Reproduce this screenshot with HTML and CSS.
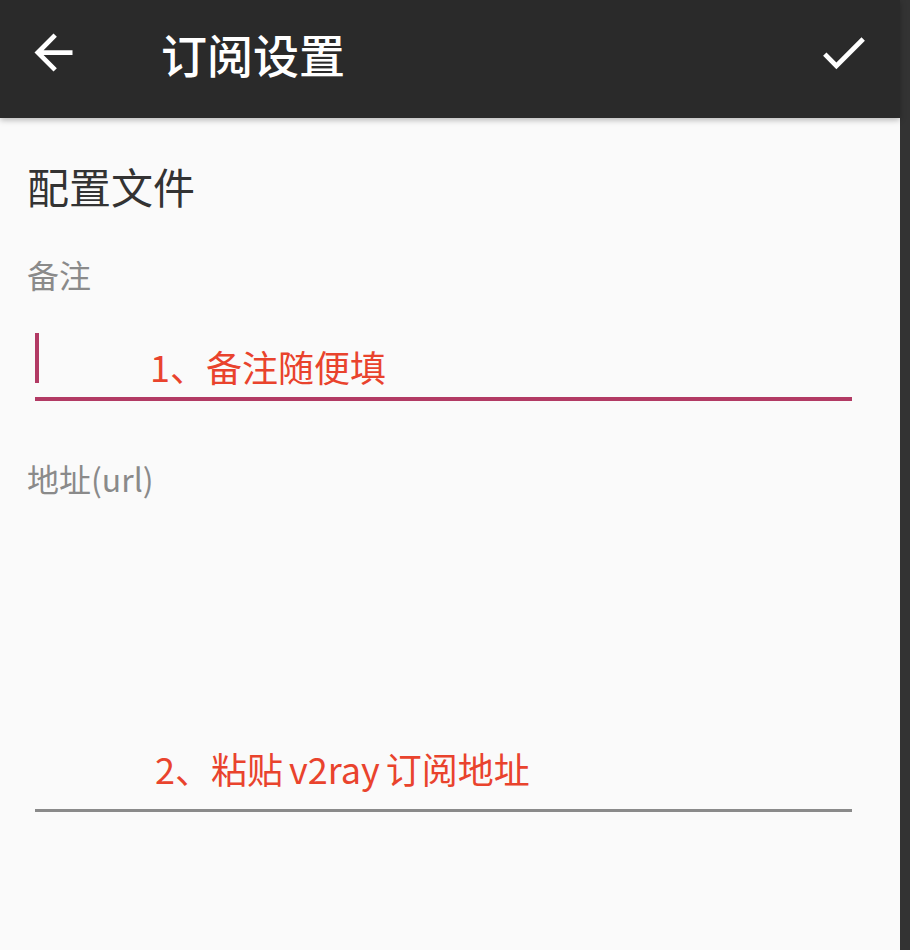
FILE: index.html
```html
<!DOCTYPE html>
<html lang="zh-CN">
<head>
<meta charset="utf-8">
<title>订阅设置</title>
<link rel="stylesheet" href="styles.css">
</head>
<body>
<div class="page">
  <div class="main">
    <header class="topbar">
      <svg class="icon" viewBox="0 0 24 24" aria-hidden="true"><path d="M20 11H7.83l5.59-5.59L12 4l-8 8 8 8 1.41-1.41L7.83 13H20v-2z"/></svg>
      <h1 class="title">订阅设置</h1>
      <svg class="icon" viewBox="0 0 24 24" aria-hidden="true"><path d="M9 16.17L4.83 12l-1.42 1.41L9 19 21 7l-1.41-1.41z"/></svg>
    </header>
    <section class="content">
      <h2 class="section-title">配置文件</h2>
      <div class="label label-remark">备注</div>
      <div class="field field-active">
        <div class="field-row">
          <span class="cursor"></span>
          <span class="note note-1">1、备注随便填</span>
        </div>
      </div>
      <div class="label label-url">地址(url)</div>
      <div class="field field-url">
        <div class="field-row">
          <span class="note note-2">2、粘贴 v2ray 订阅地址</span>
        </div>
      </div>
    </section>
  </div>
  <div class="edge"></div>
</div>
</body>
</html>
```
FILE: styles.css
```css
html, body {
  margin: 0;
  padding: 0;
}
body {
  width: 910px;
  height: 950px;
  overflow: hidden;
  background: #fafafa;
  font-family: "Noto Sans CJK SC", "Noto Sans", sans-serif;
}
.page {
  display: flex;
  height: 950px;
}
.main {
  flex: 1;
  display: flex;
  flex-direction: column;
  background: #fafafa;
}
.edge {
  width: 10px;
  background: #333333;
}
.topbar {
  position: relative;
  z-index: 1;
  box-sizing: border-box;
  height: 118px;
  padding: 0 28px 13px 25px;
  display: flex;
  align-items: center;
  background: #2a2a2a;
  box-shadow: 0 2px 6px rgba(0, 0, 0, 0.28);
}
.icon {
  width: 57px;
  height: 57px;
  fill: #ffffff;
  flex: none;
}
.title {
  flex: 1;
  margin: 0 0 0 79px;
  font-size: 46px;
  line-height: 46px;
  font-weight: 500;
  color: #ffffff;
  letter-spacing: 0;
}
.content {
  padding: 47px 0 0 27px;
}
.section-title {
  margin: 0;
  font-size: 42px;
  line-height: 42px;
  font-weight: 400;
  color: #333333;
}
.label {
  font-size: 32px;
  line-height: 32px;
  color: #8a8a8a;
}
.label-remark {
  margin-top: 51px;
}
.label-url {
  margin-top: 61px;
}
.field {
  margin-left: 8px;
  width: 817px;
}
.field-active {
  padding-top: 43px;
  padding-bottom: 13px;
  border-bottom: 4px solid #b23a64;
}
.field-url {
  padding-top: 256px;
  padding-bottom: 23px;
  border-bottom: 3px solid #8a8a8a;
}
.field-row {
  display: flex;
  align-items: flex-start;
}
.cursor {
  width: 4px;
  height: 50px;
  background: #b23a64;
}
.note {
  font-size: 36px;
  line-height: 36px;
  color: #e9432d;
}
.note-1 {
  margin-left: 111px;
  margin-top: 15px;
}
.note-2 {
  margin-left: 120px;
  word-spacing: -2px;
}
```
